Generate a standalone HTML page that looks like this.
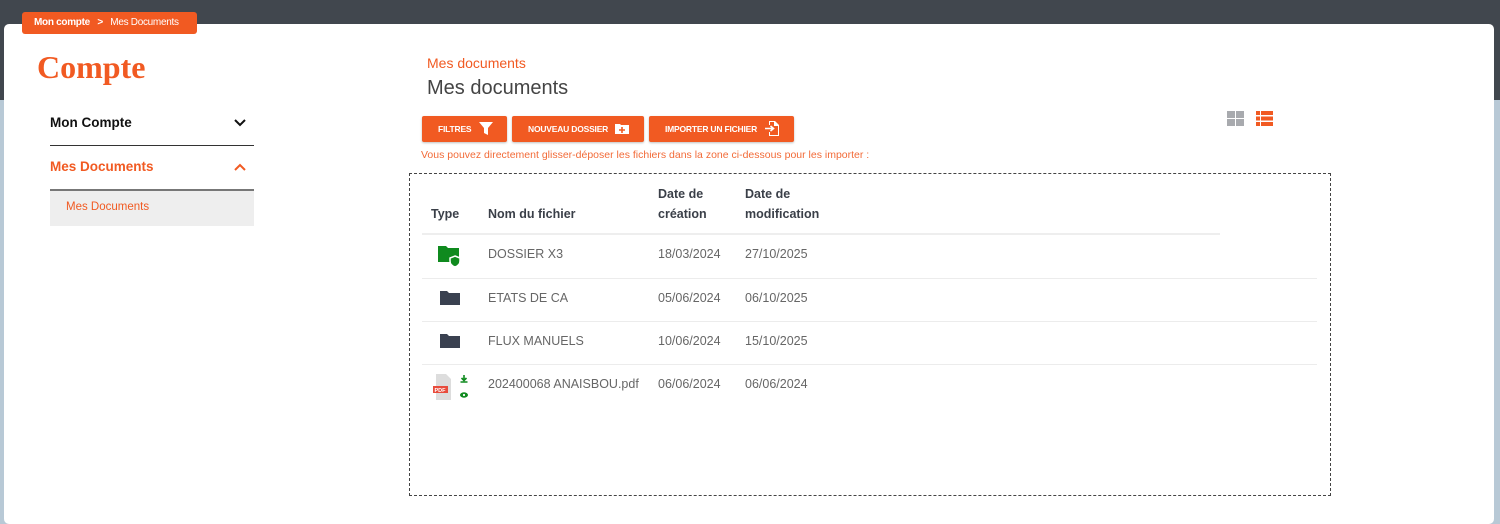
<!DOCTYPE html>
<html><head><meta charset="utf-8"><style>
*{box-sizing:border-box;margin:0;padding:0}
body{width:1500px;height:514px;overflow:hidden;background:#b8c9d6;font-family:"Liberation Sans",Arial,sans-serif;position:relative}
.top{position:absolute;left:0;top:0;width:1500px;height:100px;background:#41474e}
.card{position:absolute;left:4px;top:24px;width:1490px;height:500px;background:#fff;border-radius:5px}
.bc{position:absolute;left:22px;top:12px;width:175px;height:22px;background:#f15a22;border-radius:3px;color:#fff;font-size:10px;line-height:21px;padding-left:12px;letter-spacing:-0.3px}
.abs{position:absolute}
.o{color:#f15a22}
.btn{position:absolute;top:116px;height:26px;background:#f15a22;border-radius:2px;color:#fff;font-size:8.5px;font-weight:bold;line-height:26px;letter-spacing:-0.2px;box-shadow:0 1px 2px rgba(0,0,0,.25)}
.th{position:absolute;font-size:12.5px;font-weight:bold;color:#3a3f48;line-height:20px}
.td{position:absolute;font-size:12.5px;color:#666;}
.hl{position:absolute;left:422px;height:1px;background:#ececec;width:895px}
</style></head><body>
<div class="top"></div>
<div class="card"></div>
<div class="bc"><b>Mon compte</b>&nbsp;&nbsp;&nbsp;<b>&gt;</b>&nbsp;&nbsp;&nbsp;Mes Documents</div>
<div class="abs o" style="left:37px;top:49px;font-family:'Liberation Serif',serif;font-weight:bold;font-size:32px">Compte</div>
<div class="abs" style="left:50px;top:115px;font-size:13.5px;font-weight:bold;color:#111">Mon Compte</div>
<svg class="abs" style="left:234px;top:118px" width="12" height="9"><path d="M1 2l5 5 5-5" stroke="#111" stroke-width="2" fill="none"/></svg>
<div class="abs" style="left:50px;top:145px;width:204px;height:1px;background:#333"></div>
<div class="abs o" style="left:50px;top:159px;font-size:13.5px;font-weight:bold">Mes Documents</div>
<svg class="abs" style="left:234px;top:163px" width="12" height="9"><path d="M1 7l5-5 5 5" stroke="#f15a22" stroke-width="2" fill="none"/></svg>
<div class="abs" style="left:50px;top:189px;width:204px;height:2px;background:#777"></div>
<div class="abs" style="left:50px;top:191px;width:204px;height:35px;background:#eee"></div>
<div class="abs o" style="left:66px;top:201px;font-size:11.5px">Mes Documents</div>

<div class="abs o" style="left:427px;top:55px;font-size:14px">Mes documents</div>
<div class="abs" style="left:427px;top:77px;font-size:20px;color:#444">Mes documents</div>

<div class="btn" style="left:422px;width:85px;padding-left:16px">FILTRES
<svg style="position:absolute;left:57px;top:6px" width="14" height="13"><path d="M0 0h14l-5 6v7l-4-2v-5z" fill="#fff"/></svg></div>
<div class="btn" style="left:512px;width:132px;padding-left:16px">NOUVEAU DOSSIER
<svg style="position:absolute;left:103px;top:7px" width="14" height="11"><path d="M0 1h5l1 1h8v9H0z" fill="#fff"/><path d="M7 4v6M4 7h6" stroke="#f15a22" stroke-width="1.6"/></svg></div>
<div class="btn" style="left:649px;width:145px;padding-left:16px">IMPORTER UN FICHIER
<svg style="position:absolute;left:116px;top:5px" width="14" height="15"><path d="M4 0h6l4 4v11H4v-4h1v3h8V5h-4V1H5v3H4z" fill="#fff"/><path d="M0 7.5h8M5.5 5l3 2.5-3 2.5" stroke="#fff" stroke-width="1.6" fill="none"/></svg></div>
<div class="abs o" style="left:421px;top:149px;font-size:10.5px;opacity:.9">Vous pouvez directement glisser-déposer les fichiers dans la zone ci-dessous pour les importer :</div>

<svg class="abs" style="left:1227px;top:111px" width="17" height="15"><rect x="0" y="0" width="8" height="7" fill="#a8aaae"/><rect x="9" y="0" width="8" height="7" fill="#a8aaae"/><rect x="0" y="8" width="8" height="7" fill="#a8aaae"/><rect x="9" y="8" width="8" height="7" fill="#a8aaae"/></svg>
<svg class="abs" style="left:1256px;top:111px" width="17" height="15"><rect x="0" y="0" width="4" height="4" fill="#f15a22"/><rect x="5" y="0" width="12" height="4" fill="#f15a22"/><rect x="0" y="5.5" width="4" height="4" fill="#f15a22"/><rect x="5" y="5.5" width="12" height="4" fill="#f15a22"/><rect x="0" y="11" width="4" height="4" fill="#f15a22"/><rect x="5" y="11" width="12" height="4" fill="#f15a22"/></svg>

<div class="abs" style="left:409px;top:173px;width:922px;height:323px;border:1px dashed #444"></div>
<div class="th" style="left:431px;top:204px">Type</div>
<div class="th" style="left:488px;top:204px">Nom du fichier</div>
<div class="th" style="left:658px;top:184px">Date de<br>création</div>
<div class="th" style="left:745px;top:184px">Date de<br>modification</div>
<div class="abs" style="left:422px;top:233px;width:798px;height:2px;background:#eee"></div>
<div class="hl" style="top:278px"></div>
<div class="hl" style="top:321px"></div>
<div class="hl" style="top:364px"></div>

<svg class="abs" style="left:437px;top:244px" width="27" height="24"><path d="M1 2h8l2 2h11v14H1z" fill="#0f8a1e"/><path d="M18 12l5 2v3c0 3-2 5-5 6-3-1-5-3-5-6v-3z" fill="#0f8a1e" stroke="#fff" stroke-width="1.5"/></svg>
<div class="td" style="left:488px;top:247px">DOSSIER X3</div><div class="td" style="left:658px;top:247px">18/03/2024</div><div class="td" style="left:745px;top:247px">27/10/2025</div>
<svg class="abs" style="left:440px;top:290px" width="20" height="16"><path d="M0 1h7l2 2h11v12H0z" fill="#3a4150"/></svg>
<div class="td" style="left:488px;top:291px">ETATS DE CA</div><div class="td" style="left:658px;top:291px">05/06/2024</div><div class="td" style="left:745px;top:291px">06/10/2025</div>
<svg class="abs" style="left:440px;top:333px" width="20" height="16"><path d="M0 1h7l2 2h11v12H0z" fill="#3a4150"/></svg>
<div class="td" style="left:488px;top:334px">FLUX MANUELS</div><div class="td" style="left:658px;top:334px">10/06/2024</div><div class="td" style="left:745px;top:334px">15/10/2025</div>
<svg class="abs" style="left:432px;top:373px" width="40" height="28"><path d="M4 1h10l5 5v21H4z" fill="#ddd"/><rect x="1" y="13" width="15" height="7" fill="#e84c3d"/><text x="2.5" y="19" font-size="5.5" fill="#fff" font-family="Liberation Sans" font-weight="bold">PDF</text><path d="M32 2v5M29.5 5l2.5 2.5 2.5-2.5M28.5 9h7" stroke="#0f8a1e" stroke-width="1.6" fill="none"/><ellipse cx="32" cy="22" rx="4" ry="2.7" fill="#0f8a1e"/><circle cx="32" cy="22" r="1.1" fill="#fff"/></svg>
<div class="td" style="left:488px;top:377px">202400068 ANAISBOU.pdf</div><div class="td" style="left:658px;top:377px">06/06/2024</div><div class="td" style="left:745px;top:377px">06/06/2024</div>
</body></html>
